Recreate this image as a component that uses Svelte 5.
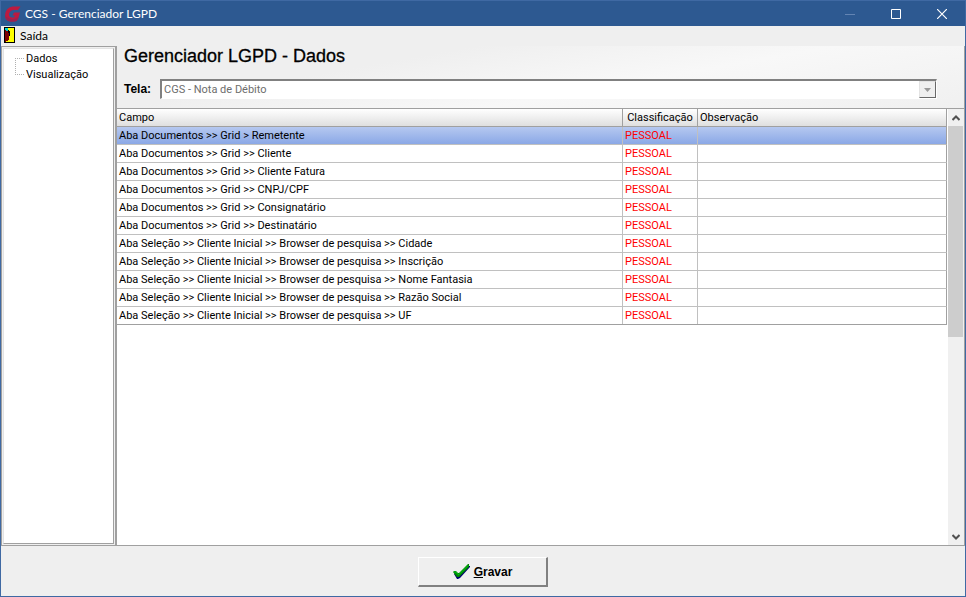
<!-- App.svelte -->
<script>
	const screens = ['CGS - Nota de Débito'];
	const pages = ['Dados', 'Visualização'];

	const rows = [
		'Aba Documentos >> Grid > Remetente',
		'Aba Documentos >> Grid >> Cliente',
		'Aba Documentos >> Grid >> Cliente Fatura',
		'Aba Documentos >> Grid >> CNPJ/CPF',
		'Aba Documentos >> Grid >> Consignatário',
		'Aba Documentos >> Grid >> Destinatário',
		'Aba Seleção >> Cliente Inicial >> Browser de pesquisa >> Cidade',
		'Aba Seleção >> Cliente Inicial >> Browser de pesquisa >> Inscrição',
		'Aba Seleção >> Cliente Inicial >> Browser de pesquisa >> Nome Fantasia',
		'Aba Seleção >> Cliente Inicial >> Browser de pesquisa >> Razão Social',
		'Aba Seleção >> Cliente Inicial >> Browser de pesquisa >> UF'
	].map((field) => ({ field, type: 'PESSOAL', note: '' }));

	let page = $state('Dados');
	let selected = $state(0);
</script>

<div class="window">
	<header class="titlebar">
		<svg class="logo" width="17" height="16" viewBox="0 0 17 16" aria-hidden="true">
			<path d="M16.5 0.5L14 4H9Q6 4.5 5 8Q5 11 7.5 11.5H10L11 9.5H8.5L10 6.5H16L14 13Q13 15.5 10 15.5H6Q1 14.5 1 9.5Q1.5 1.5 8.5 0.5Z" fill="#bd1a40" />
			<path d="M1 9Q1 14.5 6 15.5H10Q13 15.5 14 13L14.8 10.5Q12 13.5 8 13Q3 12.5 1 9Z" fill="#9a2350" />
		</svg>
		<span class="caption">CGS - Gerenciador LGPD</span>
		<button class="win-btn" aria-label="Minimizar" disabled>
			<svg width="10" height="10" viewBox="0 0 10 10"><path d="M0 5.5H10" stroke="#6384b3" /></svg>
		</button>
		<button class="win-btn" aria-label="Maximizar">
			<svg width="10" height="10" viewBox="0 0 10 10"><path d="M0.5 0.5H9.5V9.5H0.5Z" fill="none" stroke="#fff" /></svg>
		</button>
		<button class="win-btn" aria-label="Fechar">
			<svg width="10" height="10" viewBox="0 0 10 10"><path d="M0 0L10 10M10 0L0 10" stroke="#fff" stroke-width="1.2" /></svg>
		</button>
	</header>

	<nav class="menubar">
		<button class="menu-item">
			<svg width="11" height="16" viewBox="0 0 11 16" shape-rendering="crispEdges" aria-hidden="true">
				<path d="M0 0H11V16H0Z" fill="#000" />
				<path d="M1 1H10V15H1Z" fill="#ff0" />
				<path d="M1 1H4V4H1Z" fill="#00d0d8" />
				<path d="M1 3H2V4H4V5H5V13H4V14H2V15H1Z" fill="#800000" />
				<path d="M4 3H5V6H4ZM5 4H6V9H5Z" fill="#000" />
			</svg>
			Saída
		</button>
	</nav>

	<div class="content">
		<aside class="sidebar">
			<ul class="tree">
				{#each pages as name}
					<li><button onclick={() => (page = name)}>{name}</button></li>
				{/each}
			</ul>
		</aside>

		<main class="main">
			<div class="head">
				<h1>Gerenciador LGPD - {page}</h1>
				<div class="field">
					<label for="tela">Tela:</label>
					<div class="combo">
						<select id="tela" disabled>
							{#each screens as screen}
								<option>{screen}</option>
							{/each}
						</select>
						<span class="combo-arrow" aria-hidden="true">
							<svg width="7" height="4" viewBox="0 0 7 4"><path d="M0 0H7L3.5 4Z" fill="#999" /></svg>
						</span>
					</div>
				</div>
			</div>

			<div class="grid">
				<div class="grid-body">
					<table>
						<colgroup>
							<col />
							<col class="col-type" />
							<col class="col-note" />
						</colgroup>
						<thead>
							<tr>
								<th>Campo</th>
								<th class="center">Classificação</th>
								<th>Observação</th>
							</tr>
						</thead>
						<tbody>
							{#each rows as row, i}
								<tr class:selected={selected === i} onclick={() => (selected = i)}>
									<td>{row.field}</td>
									<td class="type">{row.type}</td>
									<td>{row.note}</td>
								</tr>
							{/each}
						</tbody>
					</table>
				</div>
				<div class="scrollbar">
					<button aria-label="Rolar para cima">
						<svg width="8" height="6" viewBox="0 0 8 6"><path d="M0.5 5L4 1.5L7.5 5" fill="none" stroke="#505050" stroke-width="2" /></svg>
					</button>
					<div class="track"><div class="thumb"></div></div>
					<button aria-label="Rolar para baixo">
						<svg width="8" height="6" viewBox="0 0 8 6"><path d="M0.5 1L4 4.5L7.5 1" fill="none" stroke="#505050" stroke-width="2" /></svg>
					</button>
				</div>
			</div>
		</main>
	</div>

	<footer class="footer">
		<button class="save">
			<svg width="17" height="16" viewBox="0 0 17 16" aria-hidden="true">
				<path d="M1 10L3 8L6 11L14 2H17V3L7 14L5 15H4Z" fill="#000070" />
				<path d="M0 8L1 7H3L5 9H6L14 1L15 0H16V3L6 13H4Z" fill="#008a00" />
				<path d="M1 8H3L5 10.5H6L15 1.5" fill="none" stroke="#00c020" />
			</svg>
			<span><u>G</u>ravar</span>
		</button>
	</footer>
</div>

<style>
	:global(body) {
		margin: 0;
	}

	.window {
		display: flex;
		flex-direction: column;
		min-height: 100vh;
		box-sizing: border-box;
		border: 1px solid #3f69a3;
		background: #efefef;
		color: #000;
		font-family: Roboto, 'Liberation Sans', sans-serif;
		font-size: 11px;
	}

	button {
		margin: 0;
		padding: 0;
		border: 0;
		background: none;
		color: inherit;
		font: inherit;
	}

	.titlebar {
		display: flex;
		align-items: center;
		height: 25px;
		padding-left: 3px;
		background: #2d5991;
		color: #fff;
		font-family: Lato, sans-serif;
		font-size: 12px;
	}

	.caption {
		flex: 1;
		padding-left: 4px;
	}

	.win-btn {
		display: flex;
		align-items: center;
		justify-content: center;
		width: 46px;
		height: 25px;
	}

	.menubar {
		display: flex;
		height: 20px;
		padding-left: 3px;
	}

	.menu-item {
		display: flex;
		align-items: center;
		gap: 5px;
		height: 18px;
		font-family: Lato, sans-serif;
		font-size: 12px;
	}

	.content {
		flex: 1;
		display: flex;
		border-bottom: 1px solid #a0a0a0;
	}

	.sidebar {
		width: 115px;
		box-sizing: border-box;
		padding: 1px;
		border: 1px solid #a0a0a0;
		border-bottom: 0;
		display: flex;
	}

	.tree {
		flex: 1;
		margin: 0;
		padding: 1px 0 0 11px;
		list-style: none;
		background: #fff;
		border: 1px solid #a0a0a0;
		border-top-color: #e3e3e3;
		border-left-color: #e3e3e3;
	}

	.tree li {
		display: flex;
		align-items: center;
		height: 16px;
		background: repeating-linear-gradient(90deg, #b0b0b0 0 1px, transparent 1px 2px) 0 8px / 100% 1px no-repeat;
	}

	.tree li::before {
		content: '';
		width: 1px;
		height: 8px;
		align-self: flex-end;
		background: repeating-linear-gradient(#b0b0b0 0 1px, transparent 1px 2px);
	}

	.tree li:last-child::before {
		align-self: flex-start;
	}

	.tree button {
		flex: 1;
		height: 16px;
		margin-left: 8px;
		padding-left: 2px;
		background: #fff;
		text-align: left;
	}

	.main {
		flex: 1;
		display: flex;
		flex-direction: column;
		min-width: 0;
		border-left: 1px solid #a0a0a0;
		border-right: 1px solid #a0a0a0;
	}

	.head {
		height: 62px;
		padding: 0 27px 0 7px;
		background: linear-gradient(170deg, #efefef 30%, #f8f8f8 60%, #f0f0f0);
	}

	h1 {
		margin: 0;
		font-family: 'Liberation Sans', Arial, sans-serif;
		font-size: 18px;
		font-weight: normal;
		line-height: 20px;
		-webkit-text-stroke: 0.3px #000;
	}

	.field {
		display: flex;
		align-items: center;
		margin-top: 13px;
	}

	label {
		width: 36px;
		font-family: 'Liberation Sans', Arial, sans-serif;
		font-size: 12px;
		font-weight: bold;
	}

	.combo {
		flex: 1;
		display: flex;
		height: 20px;
		box-sizing: border-box;
		border: 1px solid #fff;
		border-top: 2px solid #808080;
		border-left: 2px solid #808080;
		background: #fff;
	}

	select {
		flex: 1;
		appearance: none;
		padding: 0 2px;
		border: 0;
		background: #fff;
		color: #6d6d6d;
		font: inherit;
		opacity: 1;
	}

	.combo-arrow {
		display: flex;
		align-items: center;
		justify-content: center;
		width: 17px;
		box-sizing: border-box;
		border: 1px solid #e3e3e3;
		border-right-color: #696969;
		border-bottom-color: #696969;
		background: #efefef;
	}

	.grid {
		flex: 1;
		display: flex;
		border-top: 1px solid #a0a0a0;
		background: #fff;
	}

	.grid-body {
		flex: 1;
	}

	table {
		width: 100%;
		table-layout: fixed;
		border-collapse: separate;
		border-spacing: 0;
		border-bottom: 1px solid #a0a0a0;
	}

	.col-type {
		width: 75px;
	}

	.col-note {
		width: 249px;
	}

	th,
	td {
		height: 16px;
		padding: 1px 2px 0;
		border-right: 1px solid #c0c0c0;
		border-bottom: 1px solid #c0c0c0;
		font-weight: normal;
		line-height: 16px;
		text-align: left;
		white-space: nowrap;
	}

	th {
		border-color: #a0a0a0;
		background: linear-gradient(#fff, #dfdfdf);
	}

	th:last-child,
	td:last-child {
		border-right-color: #a0a0a0;
	}

	tbody tr:last-child td {
		border-bottom: 0;
	}

	.center {
		text-align: center;
	}

	.type {
		color: #f00;
	}

	.selected td {
		background: linear-gradient(#b5c8f0, #8ba8e6);
	}

	.scrollbar {
		display: flex;
		flex-direction: column;
		width: 16px;
		margin-left: 1px;
		background: #f0f0f0;
	}

	.scrollbar button {
		height: 17px;
	}

	.track {
		flex: 1;
	}

	.thumb {
		width: 15px;
		height: 211px;
		background: #cdcdcd;
	}

	.footer {
		display: flex;
		justify-content: center;
		padding: 11px 0 9px;
	}

	.save {
		display: flex;
		align-items: center;
		justify-content: center;
		gap: 4px;
		width: 130px;
		height: 30px;
		box-sizing: border-box;
		border: 1px solid #fff;
		border-right: 2px solid #808080;
		border-bottom: 2px solid #808080;
		background: #efefef;
		font-family: 'Liberation Sans', Arial, sans-serif;
		font-size: 12px;
		font-weight: bold;
	}
</style>
